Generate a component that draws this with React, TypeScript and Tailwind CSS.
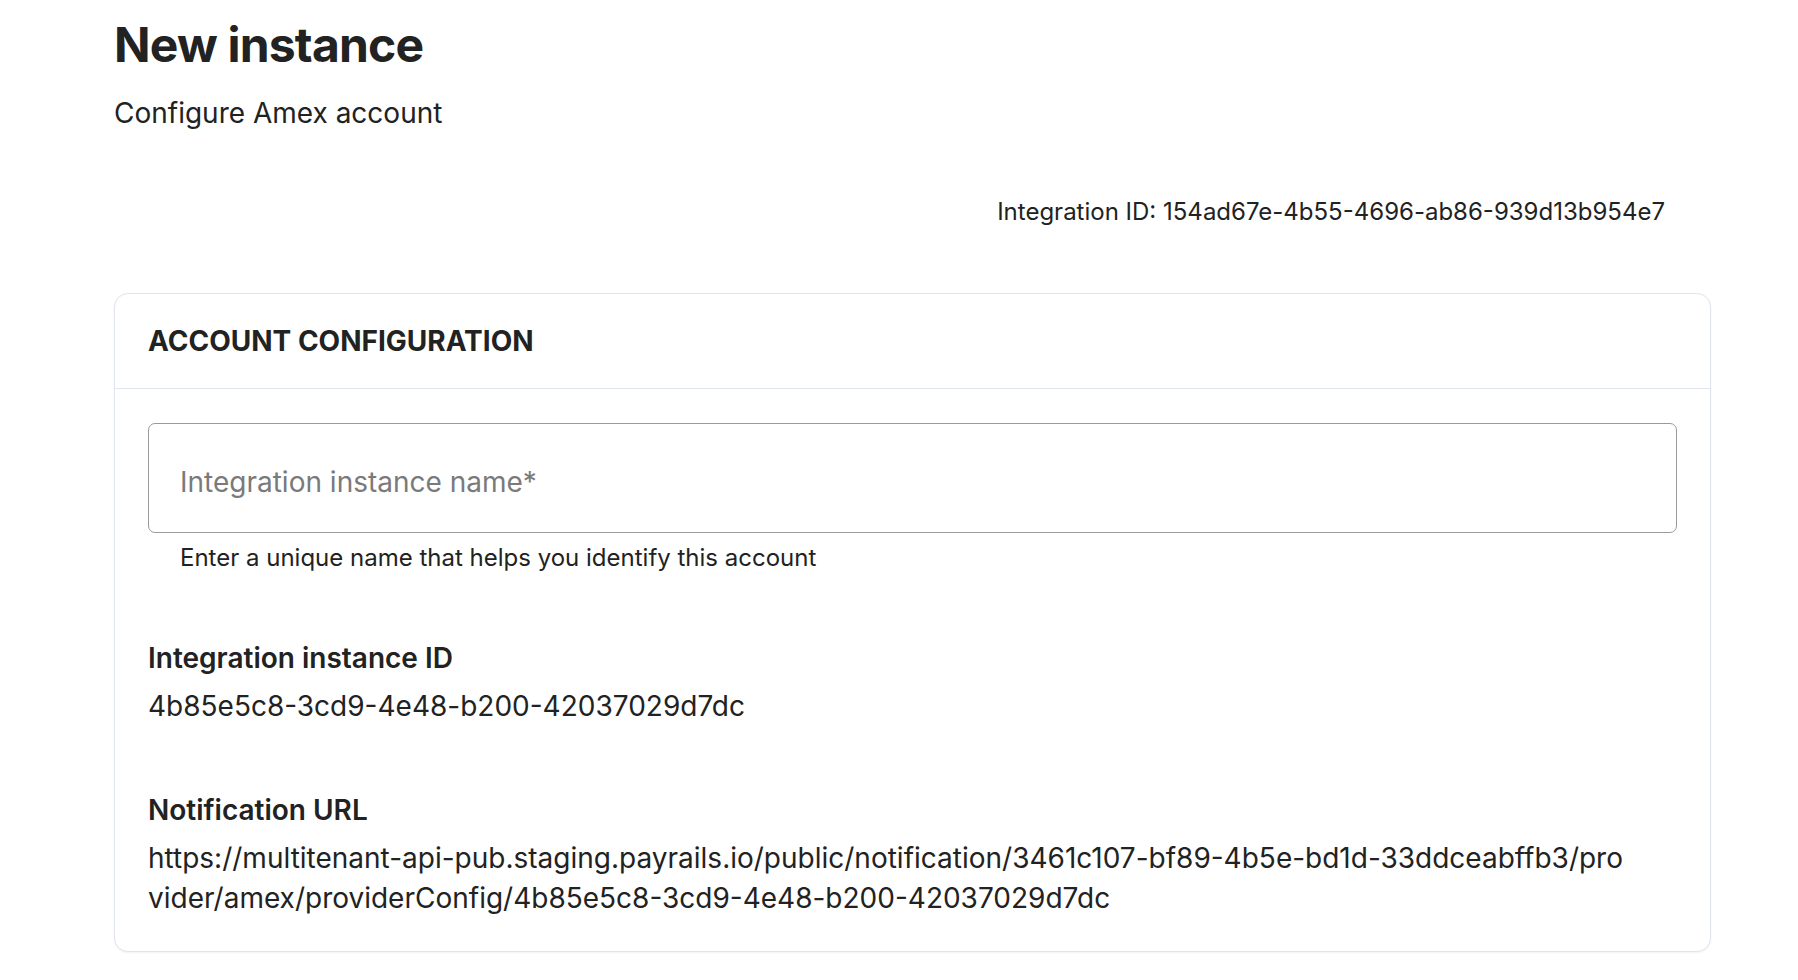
import React from 'react';

const instanceId = '4b85e5c8-3cd9-4e48-b200-42037029d7dc';
const notificationUrl =
  'https://multitenant-api-pub.staging.payrails.io/public/notification/3461c107-bf89-4b5e-bd1d-33ddceabffb3/provider/amex/providerConfig/4b85e5c8-3cd9-4e48-b200-42037029d7dc';

const Field: React.FC<{ label: string; children: React.ReactNode }> = ({ label, children }) => (
  <div className="flex flex-col gap-[8px]">
    <div className="text-[28px] leading-[39px] font-semibold text-[#222]">{label}</div>
    {children}
  </div>
);

export default function App() {
  return (
    <div
      className="min-h-screen bg-white pl-[114px] pr-[87px] pt-[15px] pb-[40px] text-[#222]"
      style={{ fontFamily: 'Inter, "Noto Sans", sans-serif' }}
    >
      {/* Header */}
      <h1 className="text-[48px] leading-[59px] font-bold tracking-[-0.8px] text-[#222]">New instance</h1>
      <p className="mt-[18px] text-[28px] leading-[42px]">Configure Amex account</p>

      <div className="mt-[58px] flex justify-end pr-[46px]">
        <span className="text-[24px] leading-[40px]">Integration ID: 154ad67e-4b55-4696-ab86-939d13b954e7</span>
      </div>

      {/* Card */}
      <div className="mt-[61px] rounded-[14px] border border-[#dfe4ee] bg-white shadow-[0_1px_2px_rgba(30,40,70,0.06)]">
        <div className="flex h-[95px] items-center border-b border-[#dfe4ee] px-[33px]">
          <h2 className="text-[28px] font-bold uppercase">Account configuration</h2>
        </div>

        <div className="flex flex-col px-[33px] pt-[34px] pb-[33px]">
          <div className="flex flex-col gap-[8px]">
            <input
              type="text"
              placeholder="Integration instance name*"
              className="h-[110px] w-full rounded-[7px] border-[1.5px] border-[#9a9a9a] px-[31px] pt-[7px] text-[28px] text-[#222] outline-none placeholder:text-[#7a7a7a]"
            />
            <span className="pl-[32px] text-[24px] leading-[33px] text-[#222]">
              Enter a unique name that helps you identify this account
            </span>
          </div>

          <div className="mt-[65px]">
            <Field label="Integration instance ID">
              <div className="text-[28px] leading-[40px]">{instanceId}</div>
            </Field>
          </div>

          <div className="mt-[65px]">
            <Field label="Notification URL">
              <div className="max-w-[1485px] break-all text-[28px] leading-[40px]">{notificationUrl}</div>
            </Field>
          </div>
        </div>
      </div>
    </div>
  );
}
